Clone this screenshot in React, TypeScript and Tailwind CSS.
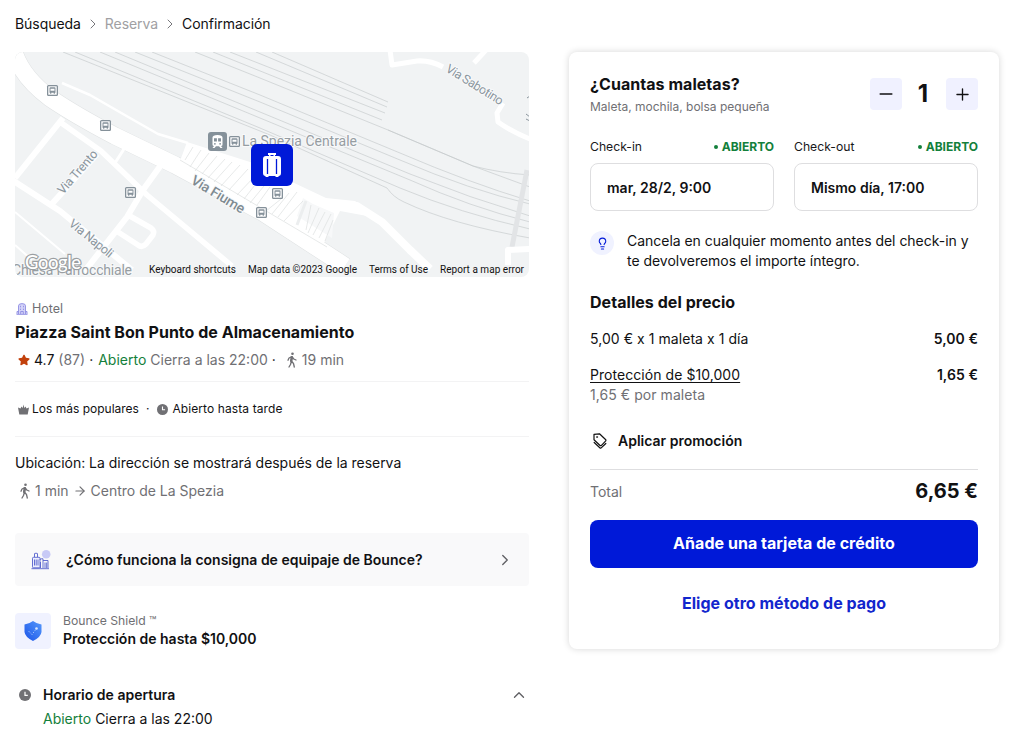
import { ChevronRight, ChevronUp, ArrowRight, Minus, Plus, Lightbulb } from "lucide-react";
import { FaStar } from "react-icons/fa";

const rails = [
  "M63 52 L270 135 L387 188 Q393 197 404 202 Q450 224 530 238",
  "M75 52 L260 128 L400 188 Q460 213 530 229",
  "M100 52 L260 118 L410 180 Q470 207 530 222",
  "M115 52 L260 112 L410 174 Q470 198 530 216",
  "M135 52 L260 102 L400 160 Q470 190 530 204",
  "M152 52 L260 95 L400 153 Q470 183 530 201",
  "M195 52 L260 78 L388 130 L473 166 Q500 173 530 175",
  "M388 130 L473 166 Q500 176 530 187",
  "M213 52 L382 120",
  "M230 52 L385 113",
  "M256 52 L387 107",
  "M272 52 L388 102",
];

const stops = [[52.5, 90.5], [105.5, 125.5], [130.5, 192.5], [234.5, 141.5], [277.5, 193.5], [261.5, 212.5]];

const hatches = [
  [193, 147, 185, 160], [201, 150, 190, 167], [209, 153, 195, 171], [217, 156, 202, 174],
  [225, 159, 208, 178], [232, 162, 214, 182], [240, 165, 221, 186], [248, 169, 229, 190],
  [255, 176, 237, 195], [258, 181, 244, 199], [264, 186, 250, 203], [270, 187, 257, 205],
  [281, 199, 266, 211], [289, 193, 272, 214], [297, 192, 278, 217], [303, 201, 284, 221],
  [311, 205, 306, 230], [319, 208, 308, 233], [325, 212, 313, 235], [331, 214, 319, 238], [333, 220, 325, 241],
];

function MapView() {
  return (
    <svg viewBox="15 52 514 225" className="block h-[225px] w-[514px] rounded-lg" fontFamily="Roboto, sans-serif">
      <rect x="15" y="52" width="514" height="225" fill="#f1f3f4" />
      <g fill="none" stroke="#c5c9cb" strokeWidth="0.65">
        {rails.map((d) => <path key={d} d={d} />)}
      </g>
      <path d="M527 170 L512 247" stroke="#e2e4e6" strokeWidth="5" />
      <g fill="none" stroke="#fff" strokeLinejoin="round">
        <path d="M14 52 Q22 77 50 98 Q75 115 115 136 L175 165 L262 212 L345 266" stroke="#dfe2e3" strokeWidth="18" />
        <path d="M14 52 Q22 77 50 98 Q75 115 115 136 L175 165 L262 212 L345 266" strokeWidth="17" />
        <path d="M63 118 L15 178" strokeWidth="6" />
        <path d="M60 122 L101 151 L147 195 L232 266" strokeWidth="5.5" />
        <path d="M12 180 L60 211 L132 270" strokeWidth="6" />
        <path d="M50 206 L97 154" strokeWidth="6" />
        <path d="M161 165 L143 190 L127 217 L84 272" strokeWidth="6" />
        <path d="M128 215 L151 228 Q155 231 153 235 L146 244 Q142 248 138 245 L118 232" strokeWidth="5.5" />
        <path d="M62 83 L90 95 L130 118 L158 134 L188 143" strokeWidth="2.5" />
        <path d="M124 149 L115 163" strokeWidth="3" />
        <path d="M15 212 L65 254 M15 245 L32 260" strokeWidth="2" />
        <path d="M390 50 L392 65 L417 61 Q430 60 443 67 M503 103 L497 113 L498 122 Q512 132 530 139" strokeWidth="5" />
        <path d="M486 50 L474 63" strokeWidth="5" />
        <path d="M508 265 L508 250 L530 249" strokeWidth="6" />
        <path d="M325 205 L357 206 L382 222 L410 250 L430 269" strokeWidth="8" />
      </g>
      <path d="M187 142 L250 162 L290 181 L326 198 L355 201 L378 218 L340 211 L323 245 L262 211 L180 161 Z" fill="#fff" />
      <path d="M303 198 L297 216 L332 238 L334 213 L313 204 Z" fill="#f7f8f9" />
      <g stroke="#dcdfe0" strokeWidth="0.7">
        {hatches.map((h) => <line key={h[0] + "-" + h[1]} x1={h[0]} y1={h[1]} x2={h[2]} y2={h[3]} />)}
        <path d="M180 160 L327 247" />
      </g>
      <path d="M306 201 L297 225" stroke="#eceeef" strokeWidth="3" />
      <g fill="#8a959d" fontSize="13" stroke="#f8f9fa" strokeWidth="2" paintOrder="stroke">
        <text transform="translate(63 195) rotate(-49)" fontSize="12.5" textLength="54">Via Trento</text>
        <text transform="translate(68 225) rotate(39)" fontSize="12.5" textLength="53">Via Napoli</text>
        <text transform="translate(190 183) rotate(31)" fontSize="14" fontWeight="500" textLength="60" fill="#7f8b92">Via Fiume</text>
        <text transform="translate(445 71) rotate(32)" fontSize="12.5" textLength="65">Via Sabotino</text>
        <text x="242" y="146" fontSize="14" textLength="115" fill="#969da2">La Spezia Centrale</text>
        <text x="12" y="275" fontSize="14" textLength="120" fill="#969da2">Chiesa Parrocchiale</text>
      </g>
      <g stroke="#8a959d" strokeWidth="1">
        <path d="M527 98 L530 96 M526 114 L530 117 M526 119 L530 121" />
      </g>
      {stops.map(([x, y]) => (
        <g key={x} transform={`translate(${x} ${y})`}>
          <rect x="-5.5" y="-5.5" width="11" height="11" rx="1.5" fill="#85919a" />
          <rect x="-4.2" y="-4.2" width="8.4" height="8.4" fill="#fff" />
          <path d="M-3 -2.5 Q-3 -3.2 -2 -3.2 H2 Q3 -3.2 3 -2.5 V2.3 H2.4 V3.2 H1.2 V2.3 H-1.2 V3.2 H-2.4 V2.3 H-3 Z" fill="#85919a" />
          <path d="M-2 -1.7 H2 V0.2 H-2 Z" fill="#fff" />
        </g>
      ))}
      <g transform="translate(217.500 141.500)">
        <rect x="-9.500" y="-9.500" width="19" height="19" rx="3" fill="#85919a" />
        <path d="M-5 -4 Q-5 -6.500 0 -6.500 Q5 -6.500 5 -4 V3 Q5 4.500 3.500 4.500 L5 6.500 H3 L1.500 4.700 H-1.500 L-3 6.500 H-5 L-3.500 4.500 Q-5 4.500 -5 3 Z" fill="#fff" />
        <path d="M-3.500 -3.200 H-0.600 V0 H-3.500 Z M0.600 -3.200 H3.500 V0 H0.600 Z" fill="#85919a" />
        <circle cx="-2.600" cy="2.300" r="0.900" fill="#85919a" /><circle cx="2.600" cy="2.300" r="0.900" fill="#85919a" />
      </g>
      <text x="25" y="269" fontFamily="Lato, sans-serif" fontSize="18.5" fontWeight="500" textLength="56" fill="#fff" stroke="#9b9fa2" strokeWidth="2.4" paintOrder="stroke">Google</text>
      <g fill="#111" fontSize="10">
        <text x="149" y="273" textLength="87">Keyboard shortcuts</text>
        <text x="248" y="273" textLength="109">Map data ©2023 Google</text>
        <text x="369" y="273" textLength="59">Terms of Use</text>
        <text x="440" y="273" textLength="84">Report a map error</text>
      </g>
      <rect x="251" y="144" width="42" height="42" rx="6" fill="#0019d8" />
      <g fill="#fff">
        <path d="M268 153 H276 V155 H275 V158 H273.500 V155 H270.500 V158 H269 V155 H268 Z" />
        <path d="M266 156 H278 Q281 156 281 159 V173 Q281 176 278.500 176 V177 H275.500 V176 H268.500 V177 H265.500 V176 Q263 176 263 173 V159 Q263 156 266 156 Z" />
      </g>
      <path d="M267.500 159 V174 M276.500 159 V174" stroke="#0019d8" strokeWidth="1.300" />
    </svg>
  );
}

function Walk({ className }: { className: string }) {
  return (
    <svg viewBox="0 0 12 16" className={className} fill="none" stroke="currentColor" strokeWidth="1.300" strokeLinecap="round" strokeLinejoin="round">
      <circle cx="6.500" cy="1.800" r="1.300" fill="currentColor" stroke="none" />
      <path d="M6 4.800 L5.300 9 L7.500 11.500 L8.300 15 M5.200 10 L4.500 12.500 L3 15 M2 8.200 L3 6 L6 4.600 L7.800 7 L10 8" />
      <path d="M5.800 5.200 L5.200 9" strokeWidth="2.500" />
    </svg>
  );
}

function Clock({ className }: { className: string }) {
  return (
    <svg viewBox="0 0 12 12" className={className}>
      <circle cx="6" cy="6" r="6" fill="#707074" />
      <path d="M6 2.800 V6.300 H8.800" fill="none" stroke="#fff" strokeWidth="1.200" />
    </svg>
  );
}

function HotelIcon() {
  return (
    <svg viewBox="0 0 12 12" className="h-3 w-3" fill="none" stroke="#8f8de2" strokeWidth="0.900">
      <path d="M0.500 11.400 H11.500 M2.500 11 V2.800 Q2.500 0.600 6 0.600 Q9.500 0.600 9.500 2.800 V11 M1 11 V8.500 H2.500 M9.500 8.500 H11 V11 M4.700 11 V8.500 H7.300 V11" fill="#d3d2f8" />
      <path d="M4.500 2.800 V4.300 M7.500 2.800 V4.300 M4.500 5.700 V7 M7.500 5.700 V7" />
    </svg>
  );
}

function LuggageIcon() {
  return (
    <svg viewBox="0 0 20 20" className="h-5 w-5" fill="none" stroke="#5360cc" strokeWidth="0.900">
      <circle cx="15.200" cy="4.300" r="4.300" fill="#c8caf6" stroke="none" />
      <rect x="1.500" y="7.300" width="7.500" height="10.500" rx="1" fill="#edeffe" />
      <path d="M3.500 7 V3.800 Q3.500 3.300 4 3.300 H6 Q6.500 3.300 6.500 3.800 V7 M3.500 9.500 V15.500 M5.200 9.500 V15.500 M7 9.500 V15.500 M9 10 Q9 8.800 10.200 8.800 H12 V18 M12 10.500 H17 V18 M14 12.500 V18 M15.700 12.500 V18 M9.500 12 V18 M0.500 18.700 H18" />
    </svg>
  );
}

function Shield() {
  return (
    <svg viewBox="0 0 18 20" className="h-5 w-[18px]">
      <defs><linearGradient id="shield" x1="0" y1="1" x2="1" y2="0"><stop stopColor="#1c55e8" /><stop offset="1" stopColor="#5598fb" /></linearGradient></defs>
      <path d="M9 0 Q12.500 2.700 17.500 3.500 V11 Q17 16 9 20 Q1 16 0.500 11 V3.500 Q5.500 2.700 9 0 Z" fill="url(#shield)" />
      <path d="M4.500 10 L8 13.500 L12.500 7.500" fill="none" stroke="#b9d3ff" strokeWidth="1" strokeDasharray="1 1.300" />
      <circle cx="12.500" cy="7.500" r="1.300" fill="#dbe8ff" />
    </svg>
  );
}

function Tag() {
  return (
    <svg viewBox="0 0 14 16" className="h-4 w-3.5" fill="none" stroke="#111" strokeWidth="1.200" strokeLinejoin="round" strokeLinecap="round">
      <path d="M1 1.300 L6.500 0.800 L12.500 6.500 Q13.300 7.300 12.500 8.200 L8.500 12.300 Q7.700 13 6.800 12.200 L1 6.800 Z" />
      <path d="M1.200 9.500 L6.800 14.700 Q7.700 15.500 8.500 14.700 L12.800 10.500" />
      <circle cx="4" cy="4" r="0.600" fill="#111" strokeWidth="0.500" />
    </svg>
  );
}

function DateField({ label, value }: { label: string; value: string }) {
  return (
    <div className="w-[184px]">
      <div className="flex h-5 items-center justify-between text-[12.200px] text-[#18181b]">
        <span>{label}</span>
        <span className="flex items-center gap-1 text-[12px] font-bold text-[#13803b]"><i className="h-1 w-1 rounded-full bg-[#13803b]" />ABIERTO</span>
      </div>
      <div className="mt-1.5 flex h-12 items-center rounded-lg border border-[#dedee0] pt-0.5 pl-4 text-sm font-semibold">{value}</div>
    </div>
  );
}

export default function App() {
  return (
    <div className="flex h-[734px] w-[1021px] overflow-hidden bg-white pl-[15px] font-['Inter',sans-serif] whitespace-nowrap text-[#111113]">
      <main className="w-[514px] shrink-0">
        <nav className="mb-1 flex h-12 items-center gap-1 text-sm tracking-[-0.004em]">
          <span>Búsqueda</span><ChevronRight size={16} strokeWidth={1.5} className="text-[#77777b]" />
          <span className="text-[#a0a0a3]">Reserva</span><ChevronRight size={16} strokeWidth={1.5} className="text-[#77777b]" />
          <span>Confirmación</span>
        </nav>
        <MapView />
        <div className="mt-[21px] flex h-[22px] items-center gap-1 pl-px text-[12.500px] text-[#707074]"><HotelIcon />Hotel</div>
        <h1 className="flex h-6 items-center text-base font-bold tracking-[0.001em]">Piazza Saint Bon Punto de Almacenamiento</h1>
        <div className="mb-[5px] flex h-8 items-center gap-1 pl-[3px] text-sm text-[#707074]">
          <FaStar size={12} className="text-[#c2410c]" /><span className="text-[#111113]">4.7</span><span>(87)</span><span className="text-[#111113]">·</span>
          <span className="ml-px text-[#13803b]">Abierto</span><span>Cierra a las 22:00</span><span className="text-[#111113]">·</span>
          <Walk className="ml-1.5 h-4 w-3" /><span>19 min</span>
        </div>
        <div className="flex h-14 items-center border-y border-[#f3f3f4] pl-[3px] text-[12px]">
          <svg viewBox="0 0 11 11" className="mr-[3px] h-[11px] w-[11px]" fill="#707074"><path d="M0 3.500 L2.500 4.500 L3.500 2.500 L4.700 4 L5.500 0.500 L6.300 4 L7.500 2.500 L8.500 4.500 L11 3.500 L9.700 10.500 H1.300 Z" /></svg>
          Los más populares<span className="mx-[7px]">·</span><Clock className="mr-1 ml-px h-[11px] w-[11px]" /><span className="tracking-[0.008em]">Abierto hasta tarde</span>
        </div>
        <div className="mt-3.5 flex h-6 items-center text-sm tracking-[-0.002em]">Ubicación: La dirección se mostrará después de la reserva</div>
        <div className="mt-1 flex h-6 items-center gap-1 pl-1 text-sm text-[#707074]"><Walk className="h-4 w-3" />1 min<ArrowRight size={14} strokeWidth={2} />Centro de La Spezia</div>
        <div className="mt-[30px] flex h-[53px] items-center rounded bg-[#f9f9fa] pr-[15px] pl-4 text-sm font-semibold">
          <LuggageIcon /><span className="ml-[15px]">¿Cómo funciona la consigna de equipaje de Bounce?</span>
          <ChevronRight size={18} strokeWidth={1.800} className="ml-auto text-[#606064]" />
        </div>
        <div className="mt-[27px] flex h-9 items-center">
          <div className="flex h-9 w-9 items-center justify-center rounded bg-[#f0f2ff]"><Shield /></div>
          <div className="-mt-0.5 ml-3"><div className="text-[12.200px] leading-[18px] text-[#707074]">Bounce Shield ™</div><div className="text-sm leading-[18px] font-semibold">Protección de hasta $10,000</div></div>
        </div>
        <div className="mt-[34px] flex h-6 items-center pl-1 text-sm font-semibold"><Clock className="mr-3 h-3 w-3" />Horario de apertura<ChevronUp size={18} strokeWidth={1.800} className="mr-px ml-auto text-[#606064]" /></div>
        <div className="flex h-6 items-center gap-1 pl-7 text-sm"><span className="text-[#13803b]">Abierto</span>Cierra a las 22:00</div>
      </main>
      <aside className="mt-[52px] ml-10 h-[597px] w-[430px] rounded-lg bg-white px-[21px] pt-[21px] shadow-[0_0_7px_rgba(0,0,0,0.16)]">
        <div className="flex h-[62px] justify-between">
          <div><h2 className="-mt-px mb-px text-base leading-6 font-bold tracking-[0.003em]">¿Cuantas maletas?</h2><p className="text-[12px] leading-5 text-[#707074]">Maleta, mochila, bolsa pequeña</p></div>
          <div className="mt-[5px] flex h-8 items-center">
            <button className="flex h-8 w-8 items-center justify-center rounded bg-[#f0f1ff]"><Minus size={20} strokeWidth={1.700} /></button>
            <span className="w-11 pr-0.5 text-center text-2xl font-bold">1</span>
            <button className="flex h-8 w-8 items-center justify-center rounded bg-[#f0f1ff]"><Plus size={19} strokeWidth={1.700} /></button>
          </div>
        </div>
        <div className="mt-0.5 flex gap-5"><DateField label="Check-in" value="mar, 28/2, 9:00" /><DateField label="Check-out" value="Mismo día, 17:00" /></div>
        <div className="mt-5 flex h-10 text-sm leading-5 tracking-[-0.002em]">
          <div className="flex h-6 w-6 items-center justify-center rounded-full bg-[#f0f2ff]"><Lightbulb size={13} strokeWidth={2} className="text-[#0019d8]" /></div>
          <p className="ml-[13px]">Cancela en cualquier momento antes del check-in y<br />te devolveremos el importe íntegro.</p>
        </div>
        <h2 className="mt-[19px] flex h-6 items-center text-base font-bold tracking-[0.003em]">Detalles del precio</h2>
        <div className="mt-[15px] flex h-5 items-center justify-between text-sm tracking-[0.004em]"><span>5,00 € x 1 maleta x 1 día</span><b className="font-semibold">5,00 €</b></div>
        <div className="mt-4 flex h-5 items-center justify-between text-sm tracking-[0.004em]"><span className="underline underline-offset-2">Protección de $10,000</span><b className="font-semibold">1,65 €</b></div>
        <div className="flex h-5 items-center text-sm tracking-[0.004em] text-[#707074]">1,65 € por maleta</div>
        <div className="mt-[26px] flex h-5 items-center pl-[3px] text-sm font-semibold"><Tag /><span className="ml-[11px]">Aplicar promoción</span></div>
        <div className="mt-[18px] flex h-11 items-center justify-between border-t border-[#dedee0]"><span className="text-sm text-[#707074]">Total</span><b className="pb-0.5 text-xl font-bold">6,65 €</b></div>
        <button className="mt-[7px] flex h-12 w-full items-center justify-center rounded-lg bg-[#0019d8] pb-0.5 text-base font-bold tracking-[0.002em] text-white">Añade una tarjeta de crédito</button>
        <button className="mt-[23px] flex h-6 w-full items-center justify-center text-base font-bold tracking-[0.002em] text-[#1226cd]">Elige otro método de pago</button>
      </aside>
    </div>
  );
}
